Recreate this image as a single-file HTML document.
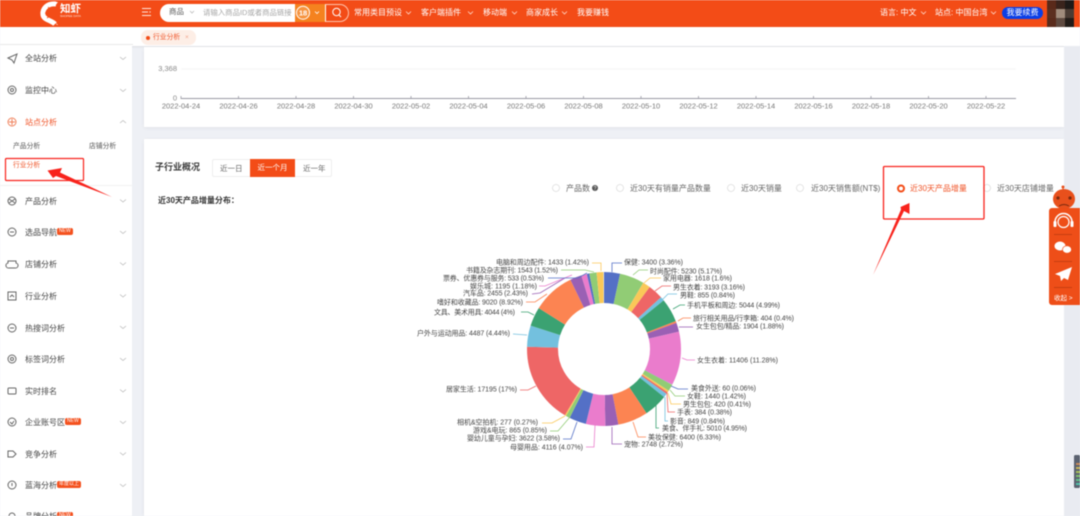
<!DOCTYPE html>
<html lang="zh"><head><meta charset="utf-8"><title>行业分析</title>
<style>
html,body{margin:0;padding:0}
body{width:1080px;height:516px;overflow:hidden;position:relative;background:#eef0f5;font-family:"Liberation Sans","Noto Sans CJK SC",sans-serif;color:#444}
#wrap{position:absolute;left:0;top:0;width:1080px;height:516px;overflow:hidden;filter:blur(.4px)}
.a{position:absolute;white-space:nowrap;line-height:1}
.hd{left:0;top:0;width:1080px;height:27px;background:#f34c17}
.n{color:#fff;font-size:8px;top:9px}
.side{left:0;top:46px;width:132px;height:470px;background:#fff}
.s{font-size:8px;left:25px;color:#444}
.card{background:#fff;box-shadow:0 1px 4px rgba(0,0,0,.06)}
svg{position:absolute;left:0;top:0}
text{font-family:"Liberation Sans","Noto Sans CJK SC",sans-serif}
.l text{font-size:7px;fill:#444}
.l polyline{fill:none;stroke-width:.8}
.bd{font-size:5px;color:#fff;background:#f4511e;border-radius:2px;padding:1px 2px}
.r{top:185px;font-size:8px;color:#666}
</style></head><body><div id="wrap">
<div class="a hd"></div>
<div class="a" style="left:0;top:27px;width:1080px;height:19px;background:#fff;box-shadow:0 1px 2px rgba(0,0,0,.08)"></div>
<div class="a" style="left:0;top:44px;width:133px;height:1px;background:#e8e8e8"></div>
<div class="a side"></div>
<div class="a card" style="left:144px;top:47px;width:920px;height:80px"></div>
<div class="a card" style="left:144px;top:139px;width:920px;height:377px"></div>
<div class="a" style="left:1064px;top:46px;width:16px;height:470px;background:#e9ebf1"></div>

<!-- header -->
<div class="a" style="left:60px;top:4px;font-size:10.5px;color:#fff;font-weight:bold">知虾</div>
<div class="a" style="left:60px;top:15px;font-size:3px;color:#ffe6dc">SHOPEE DATA</div>
<div class="a" style="left:160px;top:3.5px;width:165px;height:18.5px;border-radius:10px 0 0 10px;background:#fff;overflow:hidden">
  <div class="a" style="left:135px;top:0;width:30px;height:19px;background:#f5821f"></div>
</div>
<div class="a" style="left:325px;top:3.5px;width:24px;height:18.5px;box-sizing:border-box;border:1px solid #ffc4ad;border-left-color:#fff;border-radius:0 10px 10px 0"></div>
<div class="a" style="left:169px;top:8px;font-size:7.5px;color:#555">商品</div>
<div class="a" style="left:203px;top:8.500px;font-size:7.400px;color:#a5a5a5;width:90px;overflow:hidden">请输入商品ID或者商品链接</div>
<div class="a n" style="left:354px">常用类目预设</div>
<div class="a n" style="left:421px">客户端插件</div>
<div class="a n" style="left:483px">移动端</div>
<div class="a n" style="left:526px">商家成长</div>
<div class="a n" style="left:577px">我要赚钱</div>
<div class="a n" style="left:880px">语言: 中文</div>
<div class="a n" style="left:935px">站点: 中国台湾</div>
<div class="a" style="left:1002px;top:7px;width:41px;height:12px;background:#0b3fe6;border-radius:6px;color:#fff;font-size:8px;line-height:12px;text-align:center">我要续费</div>

<!-- tab -->
<div class="a" style="left:141px;top:30px;width:55px;height:15px;border-radius:7px;background:#fdeee6"></div>
<div class="a" style="left:153px;top:34.500px;font-size:6.800px;color:#f0562a">行业分析</div>
<div class="a" style="left:185px;top:34.500px;font-size:6.500px;color:#f3a58c">×</div>
<div class="a" style="left:146px;top:35.500px;width:4px;height:4px;border-radius:50%;background:#f34c17"></div>

<!-- sidebar -->
<div class="a s" style="top:55px">全站分析</div>
<div class="a s" style="top:87px">监控中心</div>
<div class="a s" style="top:119px;color:#f0562a">站点分析</div>
<div class="a" style="left:13px;top:144px;font-size:6.800px;color:#555">产品分析</div>
<div class="a" style="left:89px;top:144px;font-size:6.800px;color:#555">店铺分析</div>
<div class="a" style="left:13px;top:163px;font-size:6.800px;color:#f0562a">行业分析</div>
<div class="a" style="left:0;top:185px;width:132px;height:1px;background:#f2f2f2"></div>
<div class="a s" style="top:198px">产品分析</div>
<div class="a s" style="top:229px">选品导航</div><div class="a bd" style="left:57px;top:228px">NEW</div>
<div class="a s" style="top:261px">店铺分析</div>
<div class="a s" style="top:293px">行业分析</div>
<div class="a s" style="top:325px">热搜词分析</div>
<div class="a s" style="top:356px">标签词分析</div>
<div class="a s" style="top:388px">实时排名</div>
<div class="a s" style="top:419px">企业账号区</div><div class="a bd" style="left:65px;top:418px">NEW</div>
<div class="a s" style="top:451px">竞争分析</div>
<div class="a s" style="top:482px">蓝海分析</div><div class="a bd" style="left:57px;top:481px">年度以上</div>
<div class="a s" style="top:513px">品牌分析</div><div class="a bd" style="left:57px;top:512px">NEW</div>

<!-- section head -->
<div class="a" style="left:155px;top:163px;font-size:9px;font-weight:bold;color:#3a3a3a">子行业概况</div>
<div class="a" style="left:212px;top:159px;width:120px;height:18px;box-sizing:border-box;border:1px solid #eee;border-radius:2px;background:#fff"></div>
<div class="a" style="left:250px;top:159px;width:45px;height:18px;background:#f34c17;color:#fff;font-size:7.500px;line-height:18px;text-align:center">近一个月</div>
<div class="a" style="left:220px;top:164.500px;font-size:7.500px;color:#666">近一日</div>
<div class="a" style="left:303px;top:164.500px;font-size:7.500px;color:#666">近一年</div>
<div class="a" style="left:158px;top:197px;font-size:8px;font-weight:bold;color:#333">近30天产品增量分布：</div>
<div class="a r" style="left:566px">产品数</div>
<div class="a r" style="left:630px">近30天有销量产品数量</div>
<div class="a r" style="left:741px">近30天销量</div>
<div class="a r" style="left:811px">近30天销售额(NT$)</div>
<div class="a r" style="left:910px;color:#f0562a">近30天产品增量</div>
<div class="a r" style="left:997px">近30天店铺增量</div>

<svg width="1080" height="516" viewBox="0 0 1080 516">
<!-- logo -->
<path d="M56 4C47 3 42 9 43 15c1 5 8 5 12 9" stroke="#fff" stroke-width="5" fill="none"/>
<path d="M52 2l6 0-3 4zM55 22l3 3-1 0z" fill="#fff"/>
<path d="M48 7l3 3M45 13l4 1M47 18l3-2" stroke="#f34c17" stroke-width=".8"/>
<!-- hamburger -->
<path d="M142 8.500h9M142 12h6M142 15.500h9" stroke="#ffe6dc" stroke-width="1" fill="none"/>
<path d="M149.500 11l1.500 1-1.500 1z" fill="#ffe6dc"/>
<!-- search bits -->
<path d="M190 11l2 2 2-2" stroke="#bbb" fill="none" stroke-width=".8"/>
<circle cx="303" cy="12.700" r="6.500" fill="#fff" fill-opacity=".15" stroke="#fff"/>
<text x="303" y="15.500" font-size="7.500" font-weight="bold" fill="#fff" text-anchor="middle">18</text>
<path d="M315 11.500l2 2 2-2" stroke="#fff" fill="none" stroke-width=".8"/>
<circle cx="336.500" cy="12" r="3.700" stroke="#fff" fill="none"/><path d="M339 15l2 2" stroke="#fff"/>
<!-- nav chevrons -->
<g stroke="#ffd8c8" fill="none" stroke-width=".8">
<path d="M406 11.500l2.500 2.500 2.500-2.500M468 11.500l2.500 2.500 2.500-2.500M512 11.500l2.500 2.500 2.500-2.500M562 11.500l2.500 2.500 2.500-2.500M921 11.500l2.500 2.500 2.500-2.500M991 11.500l2.500 2.500 2.500-2.500"/>
</g>
<!-- avatar -->
<rect x="1047" y="0" width="9" height="9" fill="#5a2a1a"/><rect x="1056" y="0" width="9" height="9" fill="#3a241c"/><rect x="1065" y="0" width="9" height="9" fill="#1e1a18"/>
<rect x="1047" y="9" width="9" height="9" fill="#5c3020"/><rect x="1056" y="9" width="9" height="9" fill="#a08c7c"/><rect x="1065" y="9" width="9" height="9" fill="#4a3c34"/>
<rect x="1047" y="18" width="9" height="9" fill="#5a2c1c"/><rect x="1056" y="18" width="9" height="9" fill="#5e4a40"/><rect x="1065" y="18" width="9" height="9" fill="#221c18"/>

<!-- sidebar chevrons -->
<g stroke="#bbb" fill="none" stroke-width=".8">
<path d="M120 57l3 2.500 3-2.500M120 89l3 2.500 3-2.500M120 123l3-2.500 3 2.500M120 199.500l3 2.500 3-2.500M120 231l3 2.500 3-2.500M120 262.500l3 2.500 3-2.500M120 294.500l3 2.500 3-2.500M120 326l3 2.500 3-2.500M120 358l3 2.500 3-2.500M120 389.500l3 2.500 3-2.500M120 421l3 2.500 3-2.500M120 452.500l3 2.500 3-2.500M120 484l3 2.500 3-2.500"/>
</g>
<!-- sidebar icons -->
<g stroke="#666" fill="none" stroke-width="1">
<path d="M8 58l9-4-3 9-2-3z"/>
<circle cx="12" cy="90" r="4"/><circle cx="12" cy="90" r="1.500"/>
<circle cx="12" cy="122" r="4" stroke="#f0805a"/><path d="M9 122h6M12 119v6" stroke="#f0805a"/>
<circle cx="12" cy="201" r="4"/><path d="M9 199l6 4M15 199l-6 4"/>
<circle cx="12" cy="232" r="4"/><path d="M10 232h4"/>
<path d="M8 261h8v2a1 1 0 0 1-1 5h-6a1 1 0 0 1-1-5z"/>
<rect x="8" y="292" width="8" height="8"/><path d="M10 297l2-2 2 2"/>
<circle cx="12" cy="328" r="4"/><path d="M10 328h4"/>
<circle cx="12" cy="359" r="4"/><circle cx="12" cy="359" r="1.500"/>
<rect x="8" y="388" width="8" height="6" rx="1"/>
<circle cx="12" cy="422" r="4"/><path d="M10 422l2 2 2-3"/>
<path d="M8 451h5l3 3-3 3H8z"/>
<circle cx="12" cy="485" r="4"/><path d="M12 483v3"/>
<path d="M9 516a3 3 0 0 1 6 0"/>
</g>
<!-- annotation left -->
<rect x="5.500" y="158.500" width="78" height="22" rx="1" fill="none" stroke="#f8231c" stroke-width="1.200"/>
<polygon points="112,197 60,172.500 62,168 47.500,170.500 53,178 56,176" fill="#f8231c"/>
<!-- axis -->
<text x="177" y="71" font-size="7.500" fill="#888" text-anchor="end">3,368</text>
<text x="177" y="100.500" font-size="7.500" fill="#888" text-anchor="end">0</text>
<path d="M181 69H1016" stroke="#f5f5f5"/>
<path d="M181 98.500H1016" stroke="#9a9aa4" stroke-width="1"/>
<g stroke="#9a9aa4" stroke-width=".8"><path d="M181 99v-3M238.500 99v-3M296 99v-3M353.500 99v-3M411 99v-3M468.500 99v-3M526 99v-3M583.500 99v-3M641 99v-3M698.500 99v-3M756 99v-3M813.500 99v-3M871 99v-3M928.500 99v-3M986 99v-3"/></g>
<g font-size="7.500" fill="#777" text-anchor="middle">
<text x="181" y="108.500">2022-04-24</text><text x="238.500" y="108.500">2022-04-26</text><text x="296" y="108.500">2022-04-28</text><text x="353.500" y="108.500">2022-04-30</text><text x="411" y="108.500">2022-05-02</text><text x="468.500" y="108.500">2022-05-04</text><text x="526" y="108.500">2022-05-06</text><text x="583.500" y="108.500">2022-05-08</text><text x="641" y="108.500">2022-05-10</text><text x="698.500" y="108.500">2022-05-12</text><text x="756" y="108.500">2022-05-14</text><text x="813.500" y="108.500">2022-05-16</text><text x="871" y="108.500">2022-05-18</text><text x="928.500" y="108.500">2022-05-20</text><text x="986" y="108.500">2022-05-22</text>
</g>
<!-- radios -->
<g fill="#fff" stroke="#ddd" stroke-width=".8">
<circle cx="556" cy="188" r="3.500"/><circle cx="620" cy="188" r="3.500"/><circle cx="731" cy="188" r="3.500"/><circle cx="800" cy="188" r="3.500"/><circle cx="987" cy="188" r="3.500"/>
</g>
<circle cx="595" cy="188" r="3" fill="#555"/><text x="595" y="190" font-size="5" fill="#fff" text-anchor="middle">?</text>
<circle cx="901" cy="188.500" r="3" fill="#fff" stroke="#f34c17" stroke-width="2"/>
<!-- annotation right -->
<rect x="883.500" y="166.500" width="100.500" height="52.500" rx="1" fill="none" stroke="#f8231c" stroke-width="1.300"/>
<polygon points="873,275 901,209.500 900.500,207 909.500,203 909.500,214 904,211" fill="#f8231c"/>

<!-- donut -->
<g fill="none" stroke-width="31" transform="rotate(-90 604 349)">
<circle cx="604" cy="349" r="61.500" pathLength="100" stroke="#5470c6" stroke-dasharray="3.36 100" stroke-dashoffset="0"/>
<circle cx="604" cy="349" r="61.500" pathLength="100" stroke="#91cc75" stroke-dasharray="5.17 100" stroke-dashoffset="-3.36"/>
<circle cx="604" cy="349" r="61.500" pathLength="100" stroke="#fac858" stroke-dasharray="1.6 100" stroke-dashoffset="-8.53"/>
<circle cx="604" cy="349" r="61.500" pathLength="100" stroke="#ee6666" stroke-dasharray="3.16 100" stroke-dashoffset="-10.13"/>
<circle cx="604" cy="349" r="61.500" pathLength="100" stroke="#73c0de" stroke-dasharray="0.84 100" stroke-dashoffset="-13.29"/>
<circle cx="604" cy="349" r="61.500" pathLength="100" stroke="#3ba272" stroke-dasharray="4.99 100" stroke-dashoffset="-14.13"/>
<circle cx="604" cy="349" r="61.500" pathLength="100" stroke="#fc8452" stroke-dasharray="0.4 100" stroke-dashoffset="-19.12"/>
<circle cx="604" cy="349" r="61.500" pathLength="100" stroke="#9a60b4" stroke-dasharray="1.88 100" stroke-dashoffset="-19.52"/>
<circle cx="604" cy="349" r="61.500" pathLength="100" stroke="#ea7ccc" stroke-dasharray="11.28 100" stroke-dashoffset="-21.4"/>
<circle cx="604" cy="349" r="61.500" pathLength="100" stroke="#5470c6" stroke-dasharray="0.06 100" stroke-dashoffset="-32.68"/>
<circle cx="604" cy="349" r="61.500" pathLength="100" stroke="#91cc75" stroke-dasharray="1.42 100" stroke-dashoffset="-32.74"/>
<circle cx="604" cy="349" r="61.500" pathLength="100" stroke="#fac858" stroke-dasharray="0.41 100" stroke-dashoffset="-34.16"/>
<circle cx="604" cy="349" r="61.500" pathLength="100" stroke="#ee6666" stroke-dasharray="0.38 100" stroke-dashoffset="-34.57"/>
<circle cx="604" cy="349" r="61.500" pathLength="100" stroke="#73c0de" stroke-dasharray="0.84 100" stroke-dashoffset="-34.95"/>
<circle cx="604" cy="349" r="61.500" pathLength="100" stroke="#3ba272" stroke-dasharray="4.95 100" stroke-dashoffset="-35.79"/>
<circle cx="604" cy="349" r="61.500" pathLength="100" stroke="#fc8452" stroke-dasharray="6.33 100" stroke-dashoffset="-40.74"/>
<circle cx="604" cy="349" r="61.500" pathLength="100" stroke="#9a60b4" stroke-dasharray="2.72 100" stroke-dashoffset="-47.07"/>
<circle cx="604" cy="349" r="61.500" pathLength="100" stroke="#ea7ccc" stroke-dasharray="4.07 100" stroke-dashoffset="-49.79"/>
<circle cx="604" cy="349" r="61.500" pathLength="100" stroke="#5470c6" stroke-dasharray="3.58 100" stroke-dashoffset="-53.86"/>
<circle cx="604" cy="349" r="61.500" pathLength="100" stroke="#91cc75" stroke-dasharray="0.85 100" stroke-dashoffset="-57.44"/>
<circle cx="604" cy="349" r="61.500" pathLength="100" stroke="#fac858" stroke-dasharray="0.27 100" stroke-dashoffset="-58.29"/>
<circle cx="604" cy="349" r="61.500" pathLength="100" stroke="#ee6666" stroke-dasharray="17 100" stroke-dashoffset="-58.56"/>
<circle cx="604" cy="349" r="61.500" pathLength="100" stroke="#73c0de" stroke-dasharray="4.44 100" stroke-dashoffset="-75.56"/>
<circle cx="604" cy="349" r="61.500" pathLength="100" stroke="#3ba272" stroke-dasharray="4 100" stroke-dashoffset="-80"/>
<circle cx="604" cy="349" r="61.500" pathLength="100" stroke="#fc8452" stroke-dasharray="8.92 100" stroke-dashoffset="-84"/>
<circle cx="604" cy="349" r="61.500" pathLength="100" stroke="#9a60b4" stroke-dasharray="2.43 100" stroke-dashoffset="-92.92"/>
<circle cx="604" cy="349" r="61.500" pathLength="100" stroke="#ea7ccc" stroke-dasharray="1.18 100" stroke-dashoffset="-95.35"/>
<circle cx="604" cy="349" r="61.500" pathLength="100" stroke="#5470c6" stroke-dasharray="0.53 100" stroke-dashoffset="-96.53"/>
<circle cx="604" cy="349" r="61.500" pathLength="100" stroke="#91cc75" stroke-dasharray="1.52 100" stroke-dashoffset="-97.06"/>
<circle cx="604" cy="349" r="61.500" pathLength="100" stroke="#fac858" stroke-dasharray="1.42 100" stroke-dashoffset="-98.58"/>
</g>
<!-- label lines -->
<g class="l">
<polyline stroke="#5470c6" points="612,272 612,263 622,263"/>
<polyline stroke="#91cc75" points="633,275 639,270 648,270"/>
<polyline stroke="#fac858" points="644,283 650,278 661,278"/>
<polyline stroke="#ee6666" points="655,291 662,286 671,286"/>
<polyline stroke="#73c0de" points="662,300 668,294 677,294"/>
<polyline stroke="#3ba272" points="673,309 680,305 685,305"/>
<polyline stroke="#fc8452" points="678,321 683,318 691,318"/>
<polyline stroke="#9a60b4" points="679,327 686,327 693,327"/>
<polyline stroke="#ea7ccc" points="682,358 687,360 695,360"/>
<polyline stroke="#5470c6" points="671,386 678,389 688,389"/>
<polyline stroke="#91cc75" points="670,390 675,396 685,396"/>
<polyline stroke="#fac858" points="668,393 671,404 681,404"/>
<polyline stroke="#ee6666" points="667,393 668,412 675,412"/>
<polyline stroke="#73c0de" points="665,397 665,421 668,421"/>
<polyline stroke="#3ba272" points="656,405 656,428 659,428"/>
<polyline stroke="#fc8452" points="633,422 638,437 646,437"/>
<polyline stroke="#9a60b4" points="612,427 612,444 622,444"/>
<polyline stroke="#ea7ccc" points="595,425 594,447 586,447"/>
<polyline stroke="#5470c6" points="577,422 571,439 563,439"/>
<polyline stroke="#91cc75" points="570,417 558,431 550,431"/>
<polyline stroke="#fac858" points="565,416 552,423 542,423"/>
<polyline stroke="#ee6666" points="536,386 528,390 520,390"/>
<polyline stroke="#73c0de" points="527,335 513,334"/>
<polyline stroke="#3ba272" points="534,315 528,312 521,312"/>
<polyline stroke="#fc8452" points="547,294 535,302 526,302"/>
<polyline stroke="#9a60b4" points="565,278 540,293 532,294"/>
<polyline stroke="#ea7ccc" points="572,275 545,286 539,286"/>
<polyline stroke="#5470c6" points="587,273 578,278 548,278"/>
<polyline stroke="#91cc75" points="594,272 585,270 561,270"/>
<polyline stroke="#fac858" points="601,271 601,263 592,263"/>
<text x="624" y="264.500" textLength="59">保健: 3400 (3.36%)</text>
<text x="650" y="273.500" textLength="72">时尚配件: 5230 (5.17%)</text>
<text x="663" y="280.500" textLength="69">家用电器: 1618 (1.6%)</text>
<text x="673" y="289.500" textLength="72">男生衣着: 3193 (3.16%)</text>
<text x="680" y="297.500" textLength="55">男鞋: 855 (0.84%)</text>
<text x="687" y="307.500" textLength="93">手机平板和周边: 5044 (4.99%)</text>
<text x="693" y="320.500" textLength="101">旅行相关用品/行李箱: 404 (0.4%)</text>
<text x="696" y="328.500" textLength="88">女生包包/精品: 1904 (1.88%)</text>
<text x="697" y="362.500" textLength="81">女生衣着: 11406 (11.28%)</text>
<text x="691" y="390.500" textLength="65">美食外送: 60 (0.06%)</text>
<text x="687" y="398.500" textLength="59">女鞋: 1440 (1.42%)</text>
<text x="683" y="406.500" textLength="68">男生包包: 420 (0.41%)</text>
<text x="677" y="414.500" textLength="55">手表: 384 (0.38%)</text>
<text x="670" y="423.500" textLength="55">影音: 849 (0.84%)</text>
<text x="662" y="430.500" textLength="85">美食、伴手礼: 5010 (4.95%)</text>
<text x="648" y="439.500" textLength="73">美妆保健: 6400 (6.33%)</text>
<text x="624" y="446.500" textLength="59">宠物: 2748 (2.72%)</text>
<text x="510" y="449.500" textLength="73">母婴用品: 4116 (4.07%)</text>
<text x="467" y="440.500" textLength="93">婴幼儿童与孕妇: 3622 (3.58%)</text>
<text x="473" y="432.500" textLength="74">游戏&amp;电玩: 865 (0.85%)</text>
<text x="457" y="424.500" textLength="81">相机&amp;空拍机: 277 (0.27%)</text>
<text x="446" y="391.500" textLength="71">居家生活: 17195 (17%)</text>
<text x="417" y="335.500" textLength="93">户外与运动用品: 4487 (4.44%)</text>
<text x="434" y="314.500" textLength="81">文具、美术用具: 4044 (4%)</text>
<text x="437" y="304.500" textLength="86">嗜好和收藏品: 9020 (8.92%)</text>
<text x="463" y="295.500" textLength="65">汽车品: 2455 (2.43%)</text>
<text x="470" y="288.500" textLength="67">娱乐城: 1195 (1.18%)</text>
<text x="443" y="280.500" textLength="101">票券、优惠券与服务: 533 (0.53%)</text>
<text x="466" y="272.500" textLength="92">书籍及杂志期刊: 1543 (1.52%)</text>
<text x="496" y="264.500" textLength="93">电脑和周边配件: 1433 (1.42%)</text>
</g>

<!-- robot + panel -->
<circle cx="1063" cy="187" r="1.500" fill="#e8501c"/><path d="M1063 187v4" stroke="#e8501c"/>
<ellipse cx="1064" cy="199" rx="11" ry="10" fill="#e8501c"/>
<circle cx="1058" cy="198" r="1.600" fill="#7a2a10"/><circle cx="1070" cy="198" r="1.600" fill="#7a2a10"/>
<path d="M1059 206q5-3 10 0" stroke="#7a2a10" fill="none"/>
<path d="M1080 208H1052a3 3 0 0 0-3 3v91a3 3 0 0 0 3 3h28z" fill="#ee4e18"/>
<g stroke="#fff" fill="none" stroke-width="1.500">
<path d="M1055 224v-2a8.500 8.500 0 0 1 17 0v2"/>
<circle cx="1063.500" cy="222" r="5.500" stroke-width="1.200"/>
</g>
<rect x="1053.500" y="221" width="3" height="6" rx="1" fill="#fff"/><rect x="1070.500" y="221" width="3" height="6" rx="1" fill="#fff"/>
<path d="M1054 234.500h18M1054 261.500h18M1054 287.500h18" stroke="#b93a10" stroke-width=".8"/>
<ellipse cx="1060" cy="246" rx="5.500" ry="4.500" fill="#fff"/><ellipse cx="1067" cy="249.500" rx="4.500" ry="3.700" fill="#fff" stroke="#ee4e18" stroke-width=".6"/>
<path d="M1072 267l-17 7 5 2 1 5 3-3 4 2z" fill="#fff"/>
<text x="1054" y="300" font-size="6.500" fill="#fff">收起 &gt;</text>

<!-- dark side widget -->
<rect x="1074" y="455" width="6" height="33" rx="1.500" fill="#5b6270"/>
<g>
<rect x="1076" y="463" width="4" height="2" fill="#c98a5a"/>
<rect x="1076" y="467" width="4" height="2" fill="#c9b45a"/>
<rect x="1076" y="471" width="4" height="2" fill="#a9c05a"/>
<rect x="1076" y="475" width="4" height="2" fill="#7fc06a"/>
<rect x="1076" y="479" width="4" height="2" fill="#5fc08a"/>
<rect x="1076" y="483" width="4" height="2" fill="#4fc0a8"/>
</g>
</svg>
</div></body></html>
